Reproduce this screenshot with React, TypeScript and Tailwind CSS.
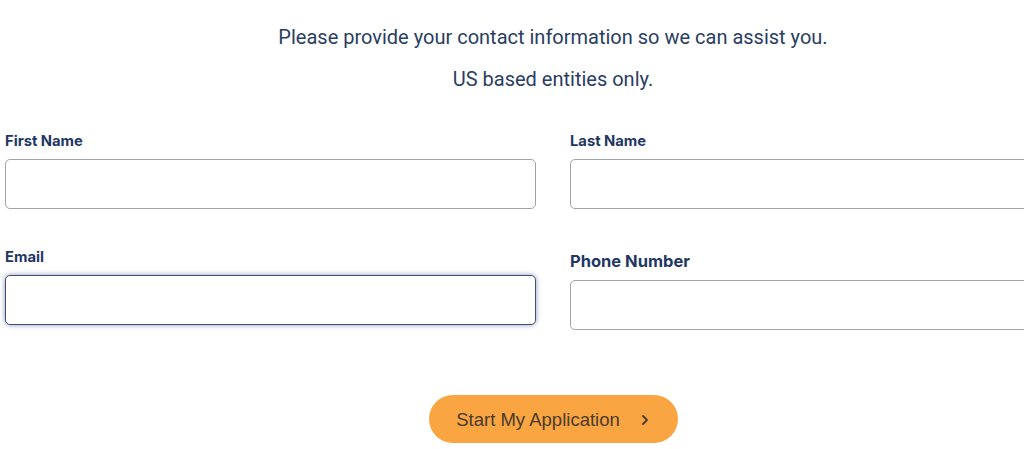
import React from "react";

function Field({ label, big, focused, extraTop }: { label: string; big?: boolean; focused?: boolean; extraTop?: boolean }) {
  return (
    <div className={extraTop ? "flex flex-col mt-[2px]" : "flex flex-col"}>
      <label
        className={
          big
            ? "text-[16.5px] leading-[24px] font-bold text-[#1f3764]"
            : "text-[14.75px] leading-[20px] font-bold text-[#1f3764]"
        }
        style={{ fontFamily: "Inter, Roboto, sans-serif" }}
      >
        {label}
      </label>
      <input
        type="text"
        className={
          focused
            ? "mt-[8px] h-[50px] w-full rounded-[5px] border border-[#3f4f78] bg-white shadow-[0_0_5px_rgba(60,80,130,0.6)] outline-none"
            : big
            ? "mt-[7px] h-[50px] w-full rounded-[5px] border border-[#a3a3a3] bg-white outline-none"
            : "mt-[8px] h-[50px] w-full rounded-[5px] border border-[#a3a3a3] bg-white outline-none"
        }
      />
    </div>
  );
}

export default function App() {
  return (
    <div
      className="w-[1024px] h-[449px] overflow-hidden bg-white"
      style={{ fontFamily: "Roboto, 'Liberation Sans', sans-serif" }}
    >
      <div className="ml-[5px] w-[1096px] flex flex-col items-center pt-[23px]">
        <p className="text-[20px] leading-[28px] text-[#2a3d63]">
          Please provide your contact information so we can assist you.
        </p>
        <p className="mt-[14px] text-[20px] leading-[28px] text-[#2a3d63]">US based entities only.</p>
        <div className="mt-[38px] w-full grid grid-cols-2 gap-x-[34px] gap-y-[38px] items-start">
          <Field label="First Name" />
          <Field label="Last Name" />
          <Field label="Email" focused />
          <Field label="Phone Number" big extraTop />
        </div>
        <button
          className="mt-[65px] h-[48px] w-[249px] rounded-full bg-[#f9a541] flex items-center justify-center gap-[20px] pt-[2px] text-[18.5px] text-[#4a3b2e]"
          style={{ fontFamily: "'Liberation Sans', Arial, sans-serif" }}
        >
          <span>Start My Application</span>
          <svg width="10" height="12" viewBox="0 0 10 12" fill="none">
            <path d="M3 2 L7 6 L3 10" stroke="#4a3b2e" strokeWidth="1.8" strokeLinecap="round" strokeLinejoin="round" />
          </svg>
        </button>
      </div>
    </div>
  );
}
